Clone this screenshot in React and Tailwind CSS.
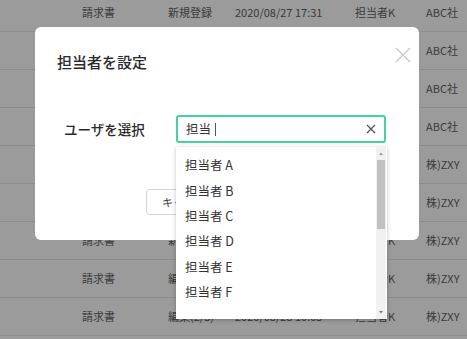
import React from "react";

const rows = [
  ["請求書", "新規登録", "2020/08/27 17:31", "担当者K", "ABC社"],
  ["請求書", "新規登録", "2020/08/27 17:20", "担当者K", "ABC社"],
  ["請求書", "新規登録", "2020/08/27 17:12", "担当者K", "ABC社"],
  ["請求書", "新規登録", "2020/08/27 16:58", "担当者K", "ABC社"],
  ["請求書", "新規登録", "2020/08/27 16:40", "担当者K", "株)ZXY"],
  ["請求書", "新規登録", "2020/08/27 16:21", "担当者K", "株)ZXY"],
  ["請求書", "新規登録", "2020/08/27 15:47", "担当者K", "株)ZXY"],
  ["請求書", "編集(2/5)", "2020/08/28 10:09", "担当者K", "株)ZXY"],
  ["請求書", "編集(2/5)", "2020/08/28 10:05", "担当者K", "株)ZXY"],
];

const options = ["担当者 A", "担当者 B", "担当者 C", "担当者 D", "担当者 E", "担当者 F"];

export default function App() {
  return (
    <div
      className="relative w-[467px] h-[339px] overflow-hidden bg-[#9b9b9b]"
      style={{ fontFamily: '"Noto Sans CJK JP", "Noto Sans", sans-serif' }}
    >
      <div className="flex flex-col mt-[-6px]">
        {rows.map((r, i) => (
          <div
            key={i}
            className="grid grid-cols-[82px_86px_67px_120px_71px_1fr] items-center h-[38px] border-b border-[#8c8c8c] text-[11px] text-[#3a3a3a] whitespace-nowrap"
          >
            <div />
            <div>{r[0]}</div>
            <div>{r[1]}</div>
            <div>{r[2]}</div>
            <div>{r[3]}</div>
            <div>{r[4]}</div>
          </div>
        ))}
      </div>

      <div className="absolute left-[35px] top-[27px] w-[384px] h-[213px] rounded-[6px] bg-white">
        <div className="flex items-start justify-between pl-[22px] pr-[8px] pt-[24px]">
          <div className="text-[15px] font-medium text-[#2a2a2a] leading-[22px]">担当者を設定</div>
          <svg width="16" height="16" viewBox="0 0 16 16" className="mt-[-4px]">
            <path d="M1 1 L15 15 M15 1 L1 15" stroke="#c8c8c8" strokeWidth="1.3" fill="none" />
          </svg>
        </div>
        <div className="flex items-center mt-[42px] pl-[29px]">
          <div className="w-[112px] text-[13.5px] font-medium text-[#2a2a2a]">ユーザを選択</div>
          <div className="flex items-center w-[210px] h-[28px] border-2 border-[#45d29c] rounded-[3px] px-[8px]">
            <span className="text-[12.5px] text-[#333]">担当</span>
            <span className="ml-[4px] w-px h-[13px] bg-[#555]" />
            <span className="flex-1" />
            <svg width="10" height="10" viewBox="0 0 10 10">
              <path d="M1 1 L9 9 M9 1 L1 9" stroke="#555" strokeWidth="1.3" fill="none" />
            </svg>
          </div>
        </div>
        <div className="flex mt-[46px] pl-[111px]">
          <div className="w-[70px] h-[26px] border border-[#d6d6d6] rounded-[4px] text-[11px] text-[#444] flex items-center pl-[15px] whitespace-nowrap overflow-hidden">
            キャンセル
          </div>
        </div>
      </div>

      <div className="absolute left-[176px] top-[147px] w-[211px] h-[172px] bg-white shadow-[0_1px_4px_rgba(0,0,0,0.25)] flex">
        <div className="flex-1 flex flex-col pt-[6px]">
          {options.map((o) => (
            <div key={o} className="h-[25.4px] flex items-center pl-[9px] text-[12.5px] text-[#333]">
              {o}
            </div>
          ))}
        </div>
        <div className="w-[10px] mr-[1px] bg-[#f1f1f1] flex flex-col items-center">
          <svg width="6" height="10" viewBox="0 0 6 10" className="mt-[2px]">
            <path d="M1 6 L3 3.5 L5 6 Z" fill="#999" />
          </svg>
          <div className="w-[8px] h-[69px] bg-[#c1c1c1] mt-[1px]" />
          <div className="flex-1" />
          <svg width="6" height="10" viewBox="0 0 6 10" className="mb-[2px]">
            <path d="M1 4 L3 6.5 L5 4 Z" fill="#777" />
          </svg>
        </div>
      </div>
    </div>
  );
}
